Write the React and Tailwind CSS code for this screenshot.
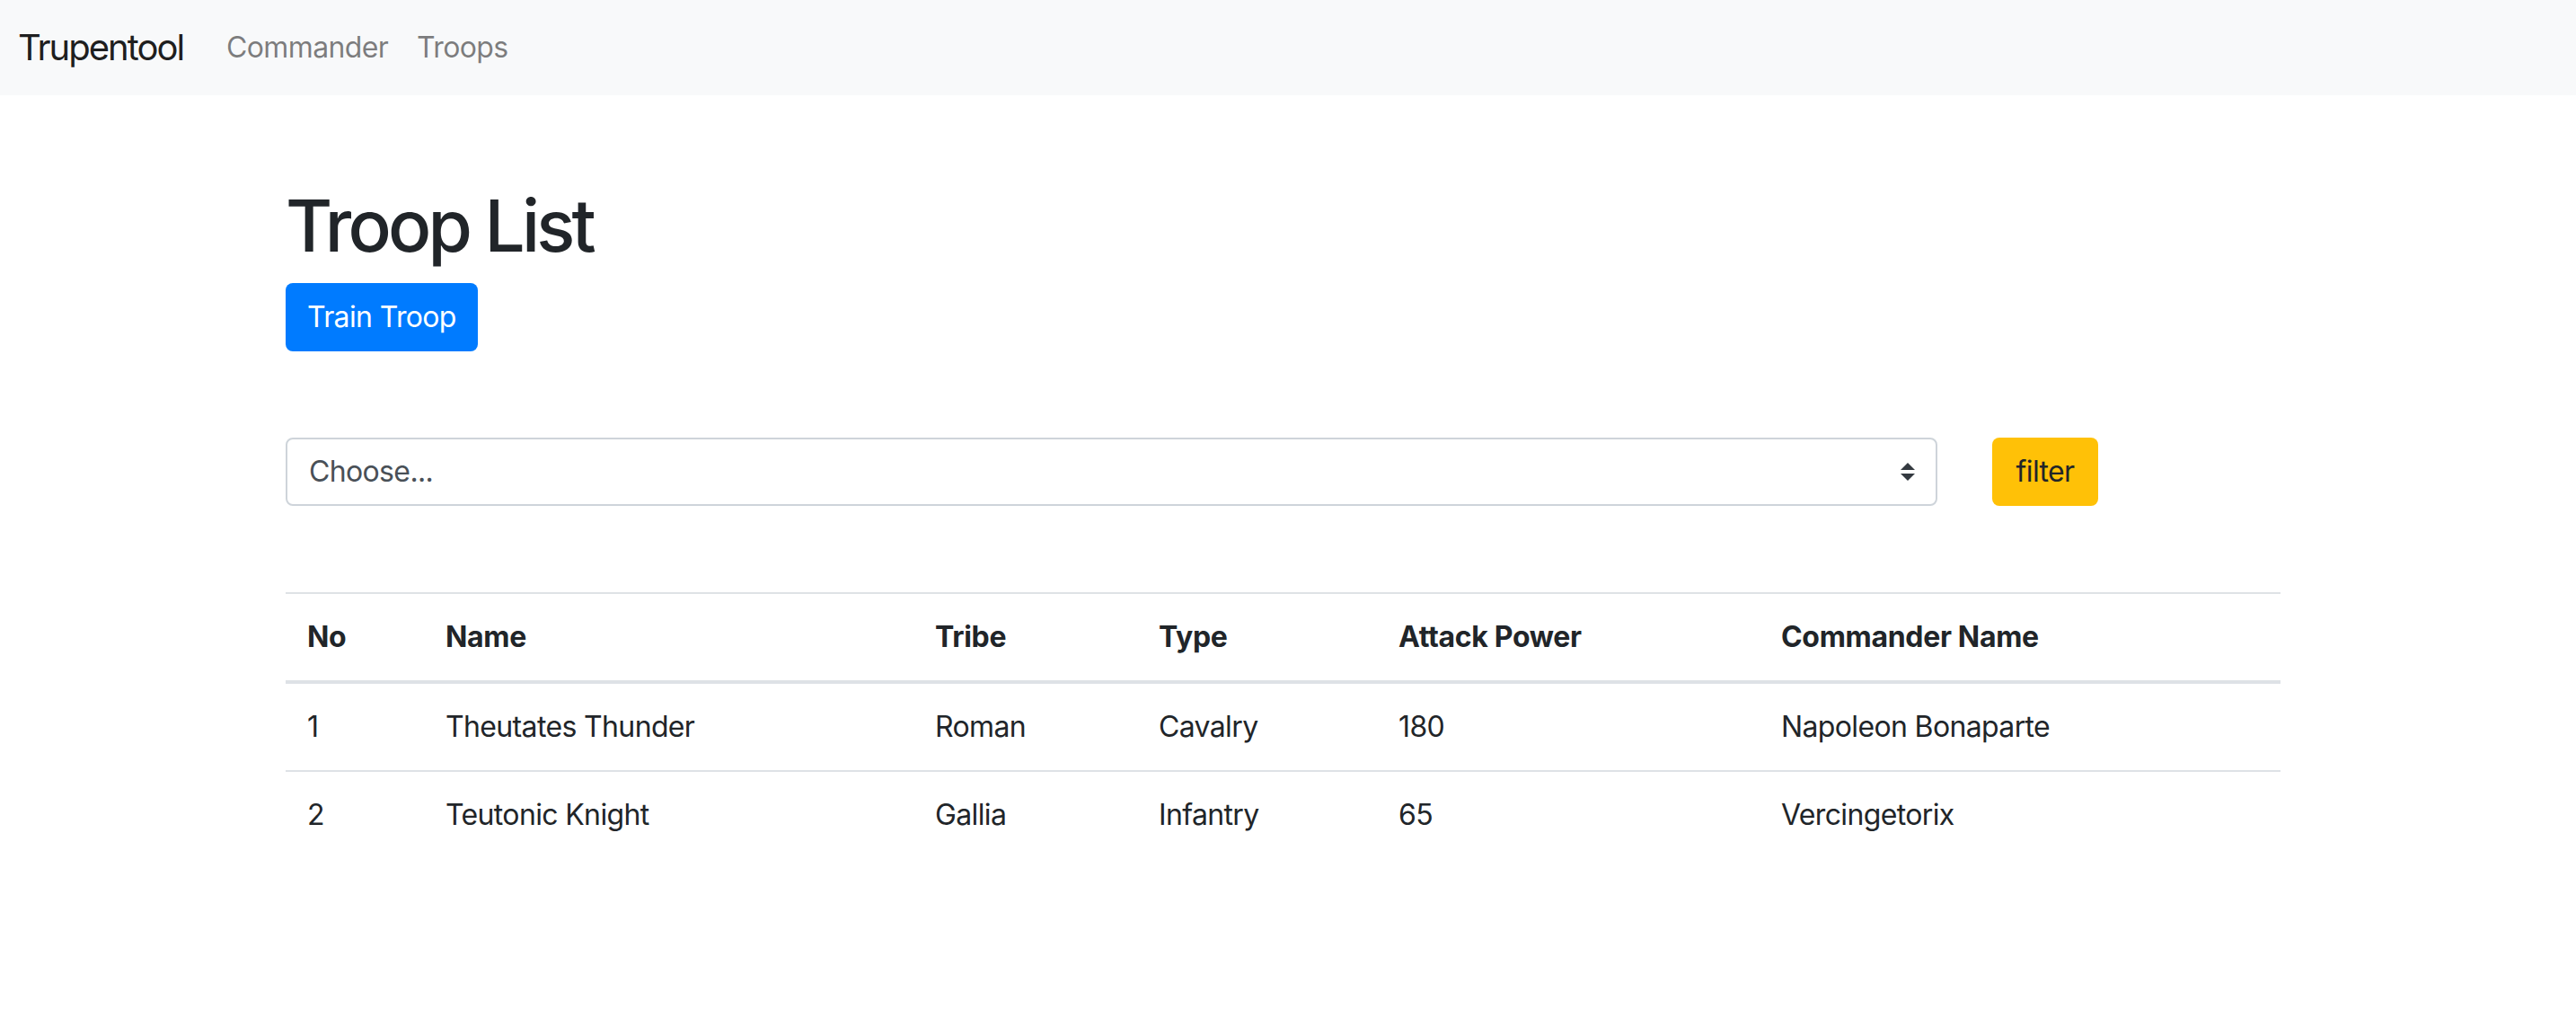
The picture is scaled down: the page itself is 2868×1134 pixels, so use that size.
import { useState } from 'react'

const troops = [
  { no: 1, name: 'Theutates Thunder', tribe: 'Roman', type: 'Cavalry', attack: 180, commander: 'Napoleon Bonaparte' },
  { no: 2, name: 'Teutonic Knight', tribe: 'Gallia', type: 'Infantry', attack: 65, commander: 'Vercingetorix' },
]

const columns = [
  { label: 'No', width: 'w-[154px]' },
  { label: 'Name', width: 'w-[545px]' },
  { label: 'Tribe', width: 'w-[249px]' },
  { label: 'Type', width: 'w-[267px]' },
  { label: 'Attack Power', width: 'w-[426px]' },
  { label: 'Commander Name', width: 'w-[580px]' },
]

function SelectArrows() {
  return (
    <svg viewBox="0 0 4 5" className="h-[20px] w-[16px]" fill="#343a40">
      <path d="M2 0L0 2h4zm0 5L0 3h4z" />
    </svg>
  )
}

export default function App() {
  const [tribe, setTribe] = useState('')

  return (
    <div className="min-h-screen bg-white font-['Inter','Liberation_Sans',sans-serif] text-[32px] leading-[48px] tracking-[-0.02em] text-[#212529]">
      <nav className="flex h-[106px] items-center bg-[#f8f9fa] pl-[20px]">
        <a className="mr-[32px] text-[40px] leading-[60px] tracking-[-0.05em] text-black/90">Trupentool</a>
        <a className="px-[16px] text-black/50">Commander</a>
        <a className="px-[16px] text-black/50">Troops</a>
      </nav>

      <main className="ml-[318px] w-[2221px] pt-[97px]">
        <h1 className="mb-[16px] text-[80px] font-medium leading-[96px] tracking-[-0.048em]">Troop List</h1>
        <button className="h-[76px] rounded-[8px] bg-[#007bff] px-[24px] text-white">Train Troop</button>

        <div className="mt-[96px] flex items-center gap-[61px]">
          <label className="relative flex h-[76px] w-[1839px] items-center rounded-[8px] border-2 border-[#ced4da] bg-white pl-[24px] text-[#495057]">
            <span>{tribe || 'Choose...'}</span>
            <span className="absolute right-[23px] top-1/2 -translate-y-1/2">
              <SelectArrows />
            </span>
          </label>
          <button
            onClick={() => setTribe('')}
            className="h-[76px] w-[118px] rounded-[8px] bg-[#ffc107] text-[#212529]"
          >
            filter
          </button>
        </div>

        <table className="mt-[96px] w-[2221px] table-fixed border-collapse text-left">
          <thead>
            <tr>
              {columns.map((c) => (
                <th
                  key={c.label}
                  className={`${c.width} border-t-2 border-b-4 border-[#dee2e6] px-[24px] py-[24px] font-bold tracking-[-0.01em]`}
                >
                  {c.label}
                </th>
              ))}
            </tr>
          </thead>
          <tbody>
            {troops.map((t) => (
              <tr key={t.no}>
                <td className="border-t-2 border-[#dee2e6] p-[24px]">{t.no}</td>
                <td className="border-t-2 border-[#dee2e6] p-[24px]">{t.name}</td>
                <td className="border-t-2 border-[#dee2e6] p-[24px]">{t.tribe}</td>
                <td className="border-t-2 border-[#dee2e6] p-[24px]">{t.type}</td>
                <td className="border-t-2 border-[#dee2e6] p-[24px]">{t.attack}</td>
                <td className="border-t-2 border-[#dee2e6] p-[24px]">{t.commander}</td>
              </tr>
            ))}
          </tbody>
        </table>
      </main>
    </div>
  )
}
